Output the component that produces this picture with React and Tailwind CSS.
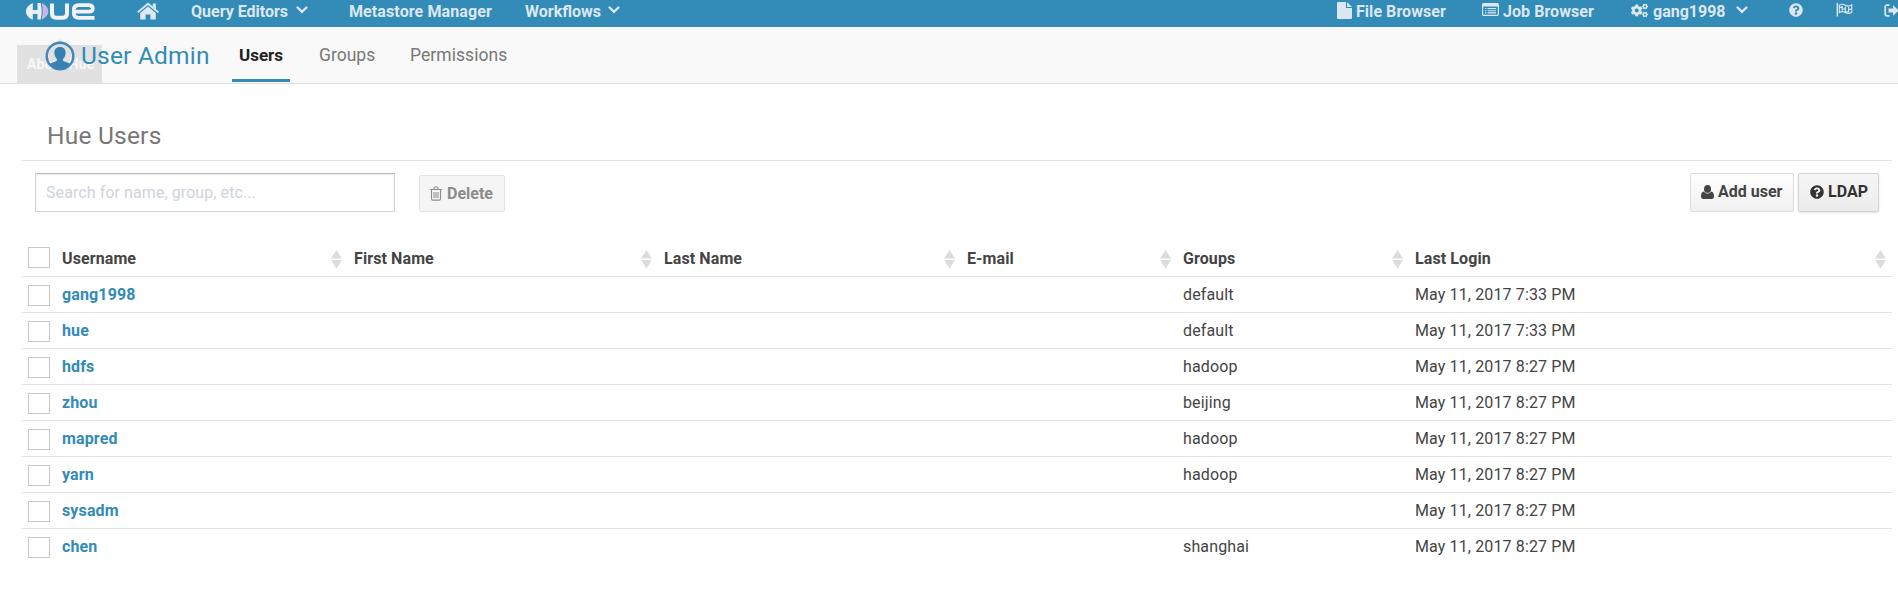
import React from "react";
import { FaCogs, FaQuestionCircle } from "react-icons/fa";

const USERS = [
  ["gang1998", "default", "May 11, 2017 7:33 PM"],
  ["hue", "default", "May 11, 2017 7:33 PM"],
  ["hdfs", "hadoop", "May 11, 2017 8:27 PM"],
  ["zhou", "beijing", "May 11, 2017 8:27 PM"],
  ["mapred", "hadoop", "May 11, 2017 8:27 PM"],
  ["yarn", "hadoop", "May 11, 2017 8:27 PM"],
  ["sysadm", "", "May 11, 2017 8:27 PM"],
  ["chen", "shanghai", "May 11, 2017 8:27 PM"],
];

const GRID = "grid grid-cols-[32px_292px_310px_303px_216px_232px_485px]";

function HueLogo() {
  return (
    <svg className="h-[18px] w-[70px]" viewBox="0 0 70 18" fill="none">
      <path d="M6.800 1C2.400 3 0 6 0 9.400s2.400 6.400 6.800 8.400V12h4.700v5.500h3.200c1.300-5.400 1.300-11 0-16.500h-3.200v7H6.800Z" fill="#e9eff5" />
      <path d="M15.700 1.200c4.600 1.800 6.600 4.800 6.600 8s-2 6.400-6.600 8.200c1.200-5.200 1.200-10.800 0-16.200Z" fill="#c9b5ee" />
      <path d="M26 1.500v10c0 2.800 1.400 4.200 4.200 4.200h6.600c2.800 0 4.200-1.400 4.200-4.200v-10" stroke="#f1f3f6" strokeWidth="4" />
      <path d="M68.500 15.800H53c-3.600 0-5.200-1.400-5.200-4.600V7.800c0-3.200 1.600-4.600 5.200-4.600h9.400c3 0 4.400 1.200 4.400 3.400 0 2.300-1.200 3.100-3.800 3.100H49" stroke="#f1f3f6" strokeWidth="3.700" />
    </svg>
  );
}

function HomeIcon() {
  return (
    <svg className="h-[18px] w-[22px]" viewBox="0 0 22 18" fill="#dbe8f1">
      <path d="M11 0.500 22 9.700l-1.300 1.400L11 3 1.300 11.100 0 9.700Z" />
      <path d="M15.800 1.400h3v6l-3-2.600Z" />
      <path d="M11 4.400 18.800 11v6.600h-5.400v-5h-4.800v5H3.200V11Z" />
    </svg>
  );
}

function FlagIcon() {
  return (
    <svg className="h-[15px] w-[17px]" viewBox="0 0 17 15" fill="none" stroke="#dbe8f1">
      <path d="M1.300 1v13.500" strokeWidth="1.400" />
      <path d="M3.300 3.200c2.200-1.300 4-1.300 6 0s4 1.300 6.500-.4v7.500c-2.500 1.500-4.500 1.500-6.500.2s-3.800-1.300-6 0Z" strokeWidth="1.100" />
      <path d="M3.500 5.800 6.300 4.600v2.200L9.300 7.200v2.400l3.300.3V7.600l3-.8M9.300 7.200V4.600" strokeWidth="1.200" />
      <path d="M6.300 6.500v2.800M12.600 5v2.600" strokeWidth="1" />
    </svg>
  );
}

function Chevron({ className }) {
  return (
    <svg className={className} width="12" height="8" viewBox="0 0 12 8" fill="none">
      <path d="M1.600 1.500 6 5.800l4.400-4.300" stroke="#dbe8f1" strokeWidth="2.400" strokeLinecap="round" />
    </svg>
  );
}

function FileIcon() {
  return (
    <svg className="h-[17px] w-[15px]" viewBox="0 0 15 17" fill="#dbe8f1">
      <path d="M1 0h8v6h6v10a1 1 0 0 1-1 1H1a1 1 0 0 1-1-1V1a1 1 0 0 1 1-1Z" />
      <path d="M10 0l5 5h-5Z" />
    </svg>
  );
}

function ListIcon() {
  return (
    <svg className="h-[13px] w-[17px]" viewBox="0 0 17 13" fill="none" stroke="#dbe8f1">
      <rect x=".6" y=".6" width="15.800" height="11.800" rx="1.200" strokeWidth="1.200" />
      <path d="M1 2h15" strokeWidth="3" />
      <path d="M3 5.500h1.200M5.500 5.500h8.500M3 7.700h1.200M5.500 7.700h8.500M3 9.900h1.200M5.500 9.900h8.500" strokeWidth="1.100" />
    </svg>
  );
}

function SignOutIcon() {
  return (
    <svg className="h-[13px] w-[15px]" viewBox="0 0 15 13">
      <path d="M5.500 1.200H3A1.800 1.800 0 0 0 1.200 3v7A1.800 1.800 0 0 0 3 11.800h2.500" fill="none" stroke="#dbe8f1" strokeWidth="1.700" />
      <path d="M4.500 4.500H9V1.200l5.800 5.300L9 11.800V8.500H4.500Z" fill="#dbe8f1" />
    </svg>
  );
}

function AvatarIcon() {
  return (
    <svg className="h-[30px] w-[30px] opacity-90" viewBox="0 0 30 30">
      <circle cx="15" cy="15" r="13.300" fill="none" stroke="#2f7fb3" strokeWidth="2.400" />
      <path d="M15 6c3.800 0 5.600 2.300 5.600 5.800 0 2.600-.9 4.800-2.500 6.200v1.800c1.600 1.300 5 1.600 7.200 3.200A12.800 12.800 0 0 1 15 28 12.800 12.800 0 0 1 4.700 23c2.200-1.600 5.600-1.900 7.200-3.200V18c-1.600-1.400-2.500-3.600-2.500-6.200C9.400 8.300 11.200 6 15 6Z" fill="#2477ae" />
    </svg>
  );
}

function TrashIcon() {
  return (
    <svg className="h-[15px] w-[12px]" viewBox="0 0 12 15" fill="none" stroke="#8c8c8c">
      <path d="M0 3.500h12M4 3.300V2q0-1 1-1h2q1 0 1 1v1.300M1.500 3.500v9.300q0 1.300 1.200 1.300h6.600q1.200 0 1.200-1.300V3.500" strokeWidth="1.100" />
      <path d="M4 6v6M6 6v6M8 6v6" strokeWidth="1" />
    </svg>
  );
}

function PersonIcon() {
  return (
    <svg className="h-[14px] w-[13px]" viewBox="0 0 13 14" fill="#444">
      <ellipse cx="6.500" cy="3.900" rx="3.500" ry="3.900" />
      <path d="M3 6.600c1 1.400 2 2 3.500 2s2.500-.6 3.500-2c2.200.2 3 2.200 3 4.900 0 1.500-.8 2.500-2.300 2.500H2.300C.8 14 0 13 0 11.500 0 8.800.8 6.800 3 6.600Z" />
    </svg>
  );
}

function Sorter() {
  return (
    <svg className="mt-px h-[19px] w-[11px]" viewBox="0 0 11 19" fill="#dcdcdc">
      <path d="M5.500 0 11 8.500H0ZM0 10h11L5.500 18.500Z" />
    </svg>
  );
}

function Box() {
  return <span className="block h-[21px] w-[22px] border border-[#c8c8c8] bg-white" />;
}

function Head({ children, last }) {
  return (
    <div className={"flex items-center justify-between pl-2 " + (last ? "pr-[6px]" : "pr-1")}>
      <span>{children}</span>
      <Sorter />
    </div>
  );
}

export default function App() {
  return (
    <div className="h-[599px] w-[1898px] overflow-hidden bg-white font-[Roboto,sans-serif] text-base text-[#444]">
      <nav className="flex h-[27px] items-start overflow-hidden bg-[#338bb8] pl-[26px] font-bold leading-[24px] text-[#dbe8f1]">
        <div className="w-[111px] shrink-0 pt-[2px]"><HueLogo /></div>
        <div className="w-[54px] shrink-0 pt-[2px]"><HomeIcon /></div>
        <div className="flex w-[158px] shrink-0 items-start justify-between pr-[41px]">
          <span>Query Editors</span><Chevron className="mt-[6px]" />
        </div>
        <div className="w-[176px] shrink-0 tracking-[0.1px]">Metastore Manager</div>
        <div className="flex w-[95px] shrink-0 items-start justify-between">
          <span>Workflows</span><Chevron className="mt-[6px]" />
        </div>
        <div className="ml-auto flex w-[145px] shrink-0 items-start gap-1 tracking-[0.05px]">
          <span className="pt-[2px]"><FileIcon /></span>File Browser
        </div>
        <div className="flex w-[149px] shrink-0 items-start gap-1 tracking-[0.05px]">
          <span className="pt-[3px]"><ListIcon /></span>Job Browser
        </div>
        <div className="flex w-[158px] shrink-0 items-start">
          <FaCogs className="mr-[5px] mt-[2px] h-[17px] w-[17px]" />gang1998
          <Chevron className="ml-[10px] mt-[6px]" />
        </div>
        <div className="w-[47px] shrink-0 pt-[3px]"><FaQuestionCircle size={14} /></div>
        <div className="w-[48px] shrink-0 pt-[2px]"><FlagIcon /></div>
        <div className="w-[14px] shrink-0 pt-[4px]"><SignOutIcon /></div>
      </nav>

      <header className="relative flex h-[57px] items-start border-b border-[#dcdcdc] bg-[#f9f9f9] pl-[45px]">
        <div className="absolute left-[17px] top-[18px] h-[39px] w-[85px] bg-[#e1e1e1] pl-[10px] text-[14px] font-bold leading-[38px] tracking-[0.1px] text-[#f8f8f8]">
          About Hue
          <span className="absolute left-[37px] top-[-6px] border-x-[6px] border-b-[6px] border-x-transparent border-b-[#e1e1e1]" />
        </div>
        <div className="relative flex w-[187px] shrink-0 items-start gap-[6px] leading-[30px] text-[#338bb8]">
          <span className="pt-[14px]"><AvatarIcon /></span>
          <span className="whitespace-nowrap pt-[14px] text-[24.500px] tracking-[0.2px]">User Admin</span>
        </div>
        <div className="flex h-[55px] w-[58px] shrink-0 items-start justify-center border-b-[3px] border-[#338bb8] pt-[17px] text-[17px] font-bold leading-[22px] text-[#222]">Users</div>
        <div className="ml-[29px] w-[91px] shrink-0 pt-[17px] text-[17.500px] leading-[22px] text-[#777]">Groups</div>
        <div className="shrink-0 pt-[17px] text-[17.500px] leading-[22px] tracking-[0.05px] text-[#777]">Permissions</div>
      </header>

      <main className="ml-[22px] w-[1870px]">
        <h1 className="h-[77px] border-b border-[#e2e2e2] pl-[25px] pt-[37px] text-[24.500px] leading-[30px] tracking-[0.22px] text-[#777]">Hue Users</h1>
        <div className="flex items-start pl-[13px] pr-[13px] pt-[12px]">
          <div className="flex h-[39px] w-[360px] items-center border border-[#d4d4d4] border-t-[#bbb] pl-[10px] tracking-[0.08px] text-[#ced3dc] shadow-[inset_0_1px_2px_rgba(0,0,0,0.08)]">
            Search for name, group, etc...
          </div>
          <div className="ml-[24px] mt-[2px] flex h-[37px] w-[86px] items-center gap-[5px] rounded-[2px] border border-[#e4e4e4] bg-[#f5f5f5] pl-[10px] font-bold text-[#8c8c8c]">
            <TrashIcon />Delete
          </div>
          <div className="ml-auto flex gap-1 font-bold">
            <div className="flex h-[39px] w-[104px] items-center gap-[4px] rounded-[2px] border border-[#dcdcdc] bg-linear-to-b from-white to-[#f0f0f0] pb-[2px] pl-[10px]">
              <PersonIcon /><span>Add user</span>
            </div>
            <div className="flex h-[39px] w-[81px] items-center gap-1 rounded-[2px] border border-[#d4d4d4] bg-linear-to-b from-[#f6f6f6] to-[#ebebeb] pb-[2px] pl-[11px] text-[#333] shadow-sm">
              <FaQuestionCircle size={14} /><span>LDAP</span>
            </div>
          </div>
        </div>

        <div className="pt-[29px]">
          <div className={GRID + " h-[36px] border-b border-[#e2e2e2] font-bold leading-[35px] tracking-[0.1px]"}>
            <div className="pl-[6px] pt-[6px]"><Box /></div>
            <Head>Username</Head>
            <Head>First Name</Head>
            <Head>Last Name</Head>
            <Head>E-mail</Head>
            <Head>Groups</Head>
            <Head last>Last Login</Head>
          </div>
          {USERS.map(([name, group, login]) => (
            <div key={name} className={GRID + " h-[36px] border-b border-[#e2e2e2] leading-[35px] tracking-[0.13px] last:border-b-0"}>
              <div className="pl-[6px] pt-[8px]"><Box /></div>
              <div className="pl-2 font-bold text-[#338bb8]">{name}</div>
              <div /><div /><div />
              <div className="pl-2">{group}</div>
              <div className="pl-2">{login}</div>
            </div>
          ))}
        </div>
      </main>
    </div>
  );
}
